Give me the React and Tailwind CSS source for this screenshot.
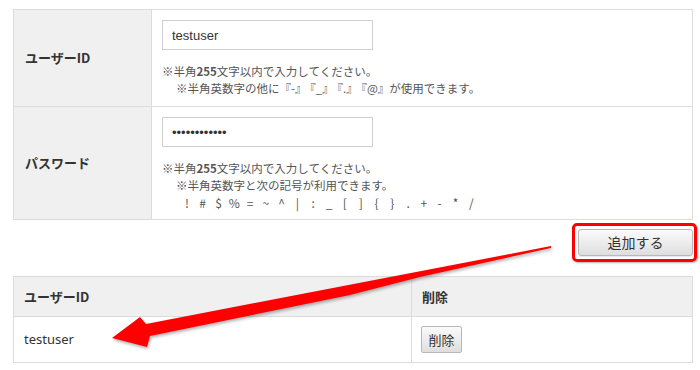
import React from 'react';

const jp = "font-['Noto_Sans_CJK_JP','Noto_Sans',sans-serif]";
const symbols = ['!', '#', '$', '%', '=', '~', '^', '|', ':', '_', '[', ']', '{', '}', '.', '+', '-', '*', '/'];

function Arrow() {
  return (
    <svg
      className="absolute left-0 top-0 pointer-events-none drop-shadow-[1px_2px_1.5px_rgba(0,0,0,0.3)]"
      width="700"
      height="370"
      viewBox="0 0 700 370"
    >
      <path
        d="M112 338 L140 317 L146 324 L551 246 L551 248 L420 277 L350 295 L150 336 L147 347 Z"
        fill="#ff0000"
      />
    </svg>
  );
}

export default function App() {
  return (
    <div className={`relative w-[700px] h-[370px] bg-white overflow-hidden text-[#333] ${jp}`}>
      <div className="ml-[13px] pt-[9px] w-[680px]">
        {/* form table */}
        <div className="border border-[#dcdcdc]">
          <div className="grid grid-cols-[138px_1fr] border-b border-[#dcdcdc]">
            <div className="bg-[#f0f0f0] border-r border-[#dcdcdc] px-[11px] flex items-center text-[13px] font-bold">
              ユーザーID
            </div>
            <div className="pl-[10px] pt-[10px] pb-[9px]">
              <input
                readOnly
                defaultValue="testuser"
                className="block w-[211px] h-[30px] border border-[#cfcfcf] px-[9px] text-[13px] text-[#333] font-['Liberation_Sans',Arial,sans-serif] outline-none"
              />
              <div className="mt-[13px] text-[11.5px] leading-[17px] text-[#555]">
                <div>※半角<span className="font-bold">255</span>文字以内で入力してください。</div>
                <div className="pl-[14px]">
                  ※半角英数字の他に『-』<span className="ml-[3.5px]">『_』</span>
                  <span className="ml-[3.5px]">『.』</span>
                  <span className="ml-[3.5px]">『@』</span>が使用できます。
                </div>
              </div>
            </div>
          </div>
          <div className="grid grid-cols-[138px_1fr]">
            <div className="bg-[#f0f0f0] border-r border-[#dcdcdc] px-[11px] flex items-center text-[13px] font-bold">
              パスワード
            </div>
            <div className="pl-[10px] pt-[10px] pb-[8px]">
              <input
                type="password"
                readOnly
                defaultValue="testpassword"
                className="block w-[211px] h-[30px] border border-[#cfcfcf] px-[9px] text-[13px] text-[#333] font-['Liberation_Sans',Arial,sans-serif] outline-none"
              />
              <div className="mt-[13px] text-[11.5px] leading-[17px] text-[#555]">
                <div>※半角<span className="font-bold">255</span>文字以内で入力してください。</div>
                <div className="pl-[14px]">※半角英数字と次の記号が利用できます。</div>
                <div className="flex pl-[17px] text-[12px]">
                  {symbols.map((s) => (
                    <span key={s} className="w-[15.8px] text-center">{s}</span>
                  ))}
                </div>
              </div>
            </div>
          </div>
        </div>

        {/* add button */}
        <div className="flex justify-end mt-[9px]">
          <div className="relative">
            <button className="w-[115px] h-[27px] border border-[#b8b8b8] rounded-[3px] bg-linear-to-b from-[#fbfbfb] to-[#dedede] text-[14px] text-[#333] shadow-[0_1px_1px_rgba(0,0,0,0.1)]">
              追加する
            </button>
            <div className="absolute top-[-6px] bottom-[-6px] left-[-6px] right-[-4px] border-[3px] border-[#ff0000] rounded-[5px] shadow-[1px_1px_2px_rgba(0,0,0,0.3)] pointer-events-none" />
          </div>
        </div>

        {/* user list */}
        <div className="mt-[20px] border border-[#dcdcdc] text-[13px]">
          <div className="grid grid-cols-[398px_1fr] h-[40px] bg-[#f0f0f0] border-b border-[#dcdcdc] font-bold">
            <div className="flex items-center px-[10px] border-r border-[#dcdcdc]">ユーザーID</div>
            <div className="flex items-center px-[10px]">削除</div>
          </div>
          <div className="grid grid-cols-[398px_1fr] h-[45px]">
            <div className="flex items-center px-[10px] border-r border-[#dcdcdc] font-['Noto_Sans',sans-serif]">testuser</div>
            <div className="flex items-center px-[9px]">
              <button className="w-[41px] h-[27px] border border-[#b8b8b8] rounded-[2px] bg-linear-to-b from-[#fbfbfb] to-[#dedede] text-[13px] text-[#333]">
                削除
              </button>
            </div>
          </div>
        </div>
      </div>
      <Arrow />
    </div>
  );
}
